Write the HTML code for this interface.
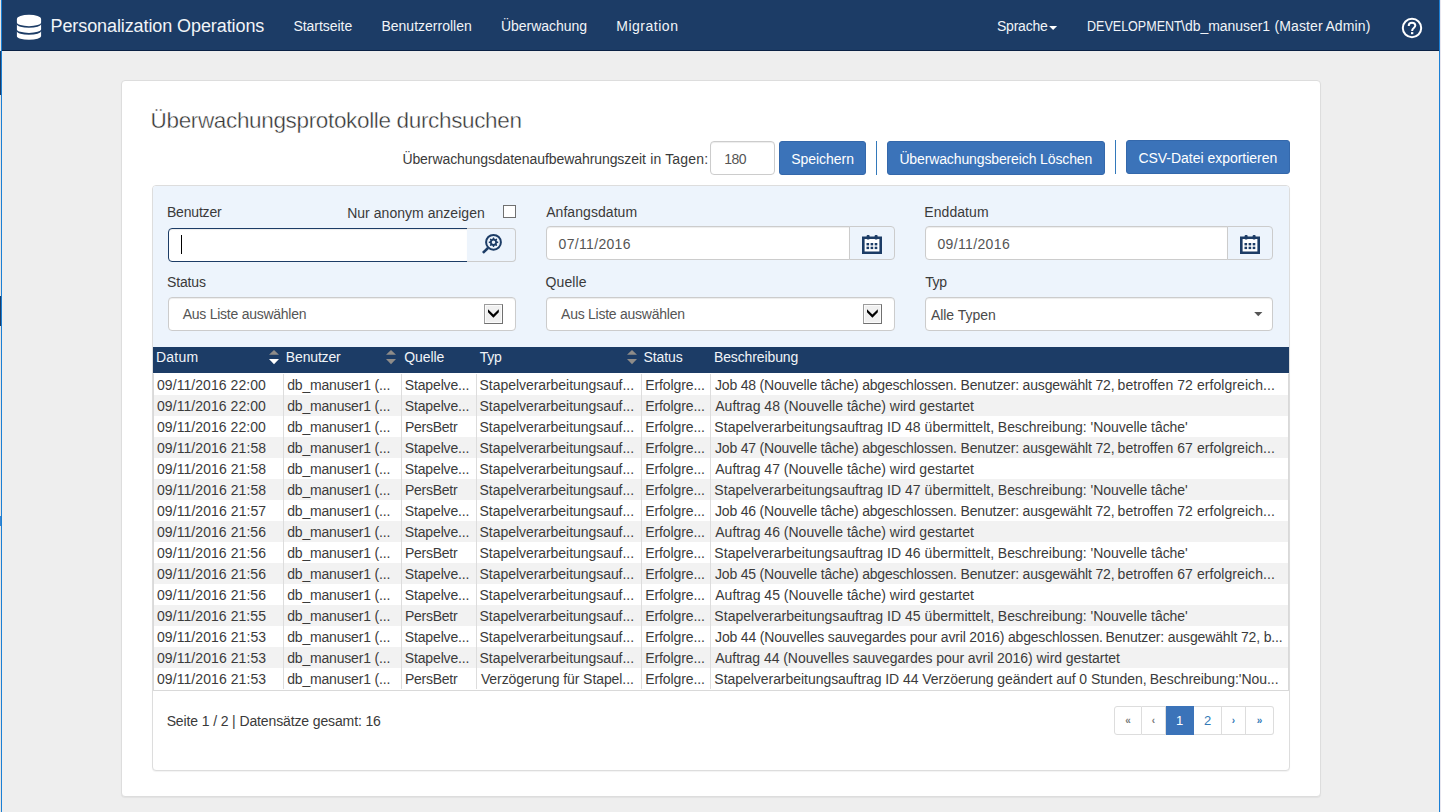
<!DOCTYPE html>
<html lang="de">
<head>
<meta charset="utf-8">
<title>Personalization Operations</title>
<style>
*{box-sizing:border-box}
html,body{margin:0;padding:0}
body{width:1441px;height:812px;overflow:hidden;position:relative;background:#eeeeee;font-family:"Liberation Sans",sans-serif;font-size:13.5px;color:#333;line-height:20px}
.abs{position:absolute}
.t{position:absolute;white-space:nowrap;line-height:20px;margin:0;font-weight:normal}
svg{position:absolute;overflow:visible}
#edgeL0{left:0;top:0;width:1px;height:812px;background:#e8e4e2}
#edgeL1{left:1px;top:0;width:1px;height:812px;background:#1b80d5}
#edgeR1{left:1439px;top:0;width:1px;height:812px;background:#1b80d5}
#edgeR0{left:1440px;top:0;width:1px;height:812px;background:#e8e6ee}
#nav{left:2px;top:0;width:1437px;height:51px;background:#1c3c66;border-bottom:1px solid #0a2144}
#card{left:121px;top:80px;width:1200px;height:717px;background:#fff;border:1px solid #dddddd;border-radius:4px;box-shadow:0 1px 1px rgba(0,0,0,.05)}
.btn{position:absolute;height:34px;background:#3b73b9;border:1px solid #3468ab;border-radius:3px}
.sep{position:absolute;width:1px;height:34px;background:#3379bb}
.inp{position:absolute;height:34px;background:#fff;border:1px solid #ccc;border-radius:4px;box-shadow:inset 0 1px 1px rgba(0,0,0,.075)}
.addon{position:absolute;height:34px;background:#edf4fc;border:1px solid #ccc;border-radius:0 4px 4px 0}
#panel{left:152px;top:185px;width:1138px;height:586px;background:#fff;border:1px solid #dddddd;border-radius:4px;box-shadow:0 1px 1px rgba(0,0,0,.05)}
#filters{left:153px;top:186px;width:1136px;height:161px;background:#edf4fc;border-radius:3px 3px 0 0}
#ghead{left:153px;top:347px;width:1136px;height:26px;background:#1c3c66}
#gbody{left:153px;top:373px;width:1136px;height:318px;background:#fff;border:1px solid #d9d9d9;border-top:1px solid #fff}
.row{position:absolute;left:154px;width:1134px;height:21px}
.row.alt{background:#f2f2f2}
.vl{position:absolute;top:374px;width:1px;height:315px;background:#dddddd}
.dd{position:absolute;width:19px;height:20px;background:#f0f0f0;border:1px solid;border-color:#9c9c9c #707070 #707070 #9c9c9c;box-shadow:inset 0 0 0 1px #fbfbfb}
.pg{position:absolute;top:706px;height:29px;background:#fff;border:1px solid #ddd;border-left:none;text-align:center;font-size:13px;line-height:28px}
.pg i{font-style:normal;font-weight:bold;font-size:10px;position:relative;top:0px}
</style>
</head>
<body>
<div class="abs" id="edgeL0"></div><div class="abs" style="left:0;top:51px;width:1px;height:44px;background:#1c3c66"></div><div class="abs" style="left:0;top:296px;width:1px;height:30px;background:#1c3c66"></div><div class="abs" style="left:0;top:516px;width:1px;height:10px;background:#3a86d0"></div><div class="abs" id="edgeL1"></div><div class="abs" id="edgeR1"></div><div class="abs" id="edgeR0"></div>
<nav class="abs" id="nav"></nav>
<svg style="left:0;top:0" width="60" height="50"><path d="M16.9,19 A12.1,4.2 0 0 1 41.1,19 L41.1,22.4 A12.1,3.8 0 0 1 16.9,22.4 Z M16.9,24.3 A12.1,3.4 0 0 0 41.1,24.3 L41.1,29.4 A12.1,3.5 0 0 1 16.9,29.4 Z M16.9,31.2 A12.1,3.5 0 0 0 41.1,31.2 L41.1,36.3 A12.1,3.5 0 0 1 16.9,36.3 Z" fill="#fff"/></svg>
<svg style="left:0;top:0" width="1441" height="50"><circle cx="1412" cy="28" r="9.2" fill="none" stroke="#fff" stroke-width="2"/><path d="M1408.7,25.9 C1408.7,23.9 1410.1,22.8 1412,22.8 C1413.9,22.8 1415.3,23.9 1415.3,25.6 C1415.3,28 1412.1,28.2 1412.1,30.9" fill="none" stroke="#fff" stroke-width="2"/><rect x="1411" y="32.1" width="2.3" height="2.1" fill="#fff"/><path d="M1049.1,26 h8 l-4,4 z" fill="#fff"/></svg>
<a class="t" style="left:50.49px;top:16px;font-size:18px;letter-spacing:-0.092px;color:#f1f4f8;">Personalization Operations</a>
<a class="t" style="left:293.46px;top:16px;font-size:14px;letter-spacing:-0.039px;color:#f1f4f8;">Startseite</a>
<a class="t" style="left:381.45px;top:16px;font-size:14px;letter-spacing:-0.0px;color:#f1f4f8;">Benutzerrollen</a>
<a class="t" style="left:500.89px;top:16px;font-size:14px;letter-spacing:-0.015px;color:#f1f4f8;">Überwachung</a>
<a class="t" style="left:616.25px;top:16px;font-size:14px;letter-spacing:0.516px;color:#f1f4f8;">Migration</a>
<a class="t" style="left:996.96px;top:16px;font-size:14px;letter-spacing:-0.225px;color:#f1f4f8;">Sprache</a>
<a class="t" style="left:1086.74px;top:16px;font-size:14px;letter-spacing:0px;color:#f1f4f8;transform-origin:0 0;transform:scaleX(0.8952);">DEVELOPMENT</a>
<a class="t" style="left:1181.12px;top:16px;font-size:14px;letter-spacing:-0.049px;color:#f1f4f8;">\db_manuser1</a>
<a class="t" style="left:1274.53px;top:16px;font-size:14px;letter-spacing:0.119px;color:#f1f4f8;">(Master</a>
<a class="t" style="left:1325.38px;top:16px;font-size:14px;letter-spacing:0.139px;color:#f1f4f8;">Admin)</a>
<main class="abs" id="card"></main>
<h1 class="t" style="left:150.57px;top:111px;font-size:22.5px;letter-spacing:-0.343px;color:#333333;-webkit-text-stroke:0.4px #fff;">Überwachungsprotokolle durchsuchen</h1>
<label class="t" style="left:402.39px;top:149px;font-size:14px;letter-spacing:-0.075px;color:#3a3a3a;">Überwachungsdatenaufbewahrungszeit</label>
<label class="t" style="left:650.22px;top:149px;font-size:14px;letter-spacing:0.154px;color:#3a3a3a;">in Tagen:</label>
<div class="inp" style="left:710px;top:141px;width:65px"></div>
<span class="t" style="left:724.22px;top:149px;font-size:14px;letter-spacing:-0.556px;color:#555;">180</span>
<div class="btn" style="left:779px;top:141px;width:87px"></div>
<span class="t" style="left:791.16px;top:149px;font-size:14px;letter-spacing:-0.024px;color:#fff;">Speichern</span>
<div class="sep" style="left:876px;top:141px"></div>
<div class="btn" style="left:887px;top:141px;width:218px"></div>
<span class="t" style="left:899.39px;top:149px;font-size:14px;letter-spacing:-0.125px;color:#fff;">Überwachungsbereich Löschen</span>
<div class="sep" style="left:1115px;top:140px"></div>
<div class="btn" style="left:1126px;top:140px;width:164px"></div>
<span class="t" style="left:1138.39px;top:148px;font-size:14px;letter-spacing:-0.022px;color:#fff;">CSV-Datei exportieren</span>
<section class="abs" id="panel"></section><div class="abs" id="filters"></div>
<label class="t" style="left:166.95px;top:202px;font-size:14px;letter-spacing:-0.189px;color:#3a3a3a;">Benutzer</label>
<label class="t" style="left:347.15px;top:203px;font-size:14px;letter-spacing:0.036px;color:#3a3a3a;">Nur anonym anzeigen</label>
<label class="t" style="left:546.18px;top:202px;font-size:14px;letter-spacing:0.057px;color:#3a3a3a;">Anfangsdatum</label>
<label class="t" style="left:924.35px;top:202px;font-size:14px;letter-spacing:0.058px;color:#3a3a3a;">Enddatum</label>
<label class="t" style="left:166.96px;top:272px;font-size:14px;letter-spacing:-0.132px;color:#3a3a3a;">Status</label>
<label class="t" style="left:545.6px;top:272px;font-size:14px;letter-spacing:0.074px;color:#3a3a3a;">Quelle</label>
<label class="t" style="left:925.24px;top:272px;font-size:14px;letter-spacing:-0.402px;color:#3a3a3a;">Typ</label>
<div class="inp" style="left:168px;top:228px;width:300px;border-radius:4px 0 0 4px;border-color:#1c3c66"></div>
<div class="abs" style="left:181px;top:235px;width:1px;height:19px;background:#000"></div>
<div class="addon" style="left:467px;top:228px;width:49px;border-left:none"></div>
<svg style="left:0;top:0" width="1441" height="300"><circle cx="493.5" cy="242.3" r="7.4" fill="none" stroke="#1c3c66" stroke-width="2"/><path d="M488,248 L482.9,252.9" stroke="#1c3c66" stroke-width="2.6" fill="none"/><path d="M493.03,237.52 L493.97,237.52 L494.55,238.86 L495.20,239.13 L496.55,238.59 L497.21,239.25 L496.67,240.60 L496.94,241.25 L498.28,241.83 L498.28,242.77 L496.94,243.35 L496.67,244.00 L497.21,245.35 L496.55,246.01 L495.20,245.47 L494.55,245.74 L493.97,247.08 L493.03,247.08 L492.45,245.74 L491.80,245.47 L490.45,246.01 L489.79,245.35 L490.33,244.00 L490.06,243.35 L488.72,242.77 L488.72,241.83 L490.06,241.25 L490.33,240.60 L489.79,239.25 L490.45,238.59 L491.80,239.13 L492.45,238.86 Z M491.75,242.3 a1.75,1.75 0 1 0 3.5,0 a1.75,1.75 0 1 0 -3.5,0 Z" fill="#1c3c66" fill-rule="evenodd"/></svg>
<div class="abs" style="left:503px;top:205px;width:13px;height:13px;background:#fff;border:1px solid #707070"></div>
<div class="inp" style="left:546px;top:226px;width:304px;border-radius:4px 0 0 4px"></div>
<span class="t" style="left:558.6px;top:234px;font-size:14px;letter-spacing:0.317px;color:#555;">07/11/2016</span>
<div class="addon" style="left:849px;top:226px;width:46px"></div>
<svg style="left:862px;top:234.5px" width="20" height="19"><rect x="1" y="2" width="18" height="16" fill="#fff"/><path d="M0,1.6 H20 V19 H0 Z M2.6,4.0 V16.4 H17.4 V4.0 Z" fill="#1c3c66" fill-rule="evenodd"/><rect x="4.6" y="0" width="3" height="4.6" rx="1" fill="#1c3c66"/><rect x="12.6" y="0" width="3" height="4.6" rx="1" fill="#1c3c66"/><rect x="4.5" y="8.0" width="2.6" height="2.4" fill="#1c3c66"/><rect x="4.5" y="11.7" width="2.6" height="2.4" fill="#1c3c66"/><rect x="8.6" y="8.0" width="2.6" height="2.4" fill="#1c3c66"/><rect x="8.6" y="11.7" width="2.6" height="2.4" fill="#1c3c66"/><rect x="12.7" y="8.0" width="2.6" height="2.4" fill="#1c3c66"/><rect x="12.7" y="11.7" width="2.6" height="2.4" fill="#1c3c66"/></svg>
<div class="inp" style="left:925px;top:226px;width:303px;border-radius:4px 0 0 4px"></div>
<span class="t" style="left:937.4px;top:234px;font-size:14px;letter-spacing:0.361px;color:#555;">09/11/2016</span>
<div class="addon" style="left:1227px;top:226px;width:46px"></div>
<svg style="left:1240px;top:234.5px" width="20" height="19"><rect x="1" y="2" width="18" height="16" fill="#fff"/><path d="M0,1.6 H20 V19 H0 Z M2.6,4.0 V16.4 H17.4 V4.0 Z" fill="#1c3c66" fill-rule="evenodd"/><rect x="4.6" y="0" width="3" height="4.6" rx="1" fill="#1c3c66"/><rect x="12.6" y="0" width="3" height="4.6" rx="1" fill="#1c3c66"/><rect x="4.5" y="8.0" width="2.6" height="2.4" fill="#1c3c66"/><rect x="4.5" y="11.7" width="2.6" height="2.4" fill="#1c3c66"/><rect x="8.6" y="8.0" width="2.6" height="2.4" fill="#1c3c66"/><rect x="8.6" y="11.7" width="2.6" height="2.4" fill="#1c3c66"/><rect x="12.7" y="8.0" width="2.6" height="2.4" fill="#1c3c66"/><rect x="12.7" y="11.7" width="2.6" height="2.4" fill="#1c3c66"/></svg>
<div class="inp" style="left:168px;top:297px;width:348px"></div>
<span class="t" style="left:182.68px;top:304px;font-size:14px;letter-spacing:-0.252px;color:#555;">Aus Liste auswählen</span>
<div class="dd" style="left:484px;top:304px"></div><svg style="left:484px;top:304px" width="19" height="20"><path d="M4,5.2 L9.4,10.6 L14.8,5.2 L14.8,8.2 L9.4,13.7 L4,8.2 Z" fill="#000"/></svg>
<div class="inp" style="left:546px;top:297px;width:349px"></div>
<span class="t" style="left:561.08px;top:304px;font-size:14px;letter-spacing:-0.252px;color:#555;">Aus Liste auswählen</span>
<div class="dd" style="left:863px;top:304px"></div><svg style="left:863px;top:304px" width="19" height="20"><path d="M4,5.2 L9.4,10.6 L14.8,5.2 L14.8,8.2 L9.4,13.7 L4,8.2 Z" fill="#000"/></svg>
<div class="inp" style="left:925px;top:297px;width:348px"></div>
<span class="t" style="left:930.88px;top:305px;font-size:14px;letter-spacing:-0.028px;color:#4a4a4a;">Alle Typen</span>
<svg style="left:1254px;top:312px" width="9" height="5"><path d="M0.2,0 H8.4 L4.3,4.2 Z" fill="#555"/></svg>
<div class="abs" id="ghead"></div>
<span class="t" style="left:155.95px;top:347px;font-size:14px;letter-spacing:0.223px;color:#f1f4f8;">Datum</span>
<span class="t" style="left:285.85px;top:347px;font-size:14px;letter-spacing:-0.161px;color:#f1f4f8;">Benutzer</span>
<span class="t" style="left:404.2px;top:347px;font-size:14px;letter-spacing:-0.072px;color:#f1f4f8;">Quelle</span>
<span class="t" style="left:479.74px;top:347px;font-size:14px;letter-spacing:-0.196px;color:#f1f4f8;">Typ</span>
<span class="t" style="left:643.56px;top:347px;font-size:14px;letter-spacing:-0.106px;color:#f1f4f8;">Status</span>
<span class="t" style="left:713.95px;top:347px;font-size:14px;letter-spacing:-0.112px;color:#f1f4f8;">Beschreibung</span>
<svg style="left:268.6px;top:350px" width="10" height="15"><path d="M0,4.8 L5,0 L10,4.8 Z" fill="#8f8c89"/><path d="M0,9.0 L10,9.0 L5,14.2 Z" fill="#fff"/></svg>
<svg style="left:386px;top:350px" width="10" height="15"><path d="M0,4.8 L5,0 L10,4.8 Z" fill="#8f8c89"/><path d="M0,9.0 L10,9.0 L5,14.2 Z" fill="#8f8c89"/></svg>
<svg style="left:626.7px;top:350px" width="10" height="15"><path d="M0,4.8 L5,0 L10,4.8 Z" fill="#8f8c89"/><path d="M0,9.0 L10,9.0 L5,14.2 Z" fill="#8f8c89"/></svg>
<div class="abs" id="gbody"></div>
<div class="row" style="top:374px"></div>
<div class="row alt" style="top:395px"></div>
<div class="row" style="top:416px"></div>
<div class="row alt" style="top:437px"></div>
<div class="row" style="top:458px"></div>
<div class="row alt" style="top:479px"></div>
<div class="row" style="top:500px"></div>
<div class="row alt" style="top:521px"></div>
<div class="row" style="top:542px"></div>
<div class="row alt" style="top:563px"></div>
<div class="row" style="top:584px"></div>
<div class="row alt" style="top:605px"></div>
<div class="row" style="top:626px"></div>
<div class="row alt" style="top:647px"></div>
<div class="row" style="top:668px"></div>
<div class="vl" style="left:283px"></div>
<div class="vl" style="left:401px"></div>
<div class="vl" style="left:476px"></div>
<div class="vl" style="left:641px"></div>
<div class="vl" style="left:710px"></div>
<span class="t" style="left:157.0px;top:375px;font-size:14px;letter-spacing:0.062px;color:#3b3b3b;">09/11/2016 22:00</span>
<span class="t" style="left:287.18px;top:375px;font-size:14px;letter-spacing:-0.18px;color:#3b3b3b;">db_manuser1 (...</span>
<span class="t" style="left:404.76px;top:375px;font-size:14px;letter-spacing:-0.142px;color:#3b3b3b;">Stapelve...</span>
<span class="t" style="left:479.56px;top:375px;font-size:14px;letter-spacing:-0.049px;color:#3b3b3b;">Stapelverarbeitungsauf...</span>
<span class="t" style="left:645.25px;top:375px;font-size:14px;letter-spacing:-0.102px;color:#3b3b3b;">Erfolgre...</span>
<span class="t" style="left:715.07px;top:375px;font-size:14px;letter-spacing:-0.195px;color:#3b3b3b;">Job 48 (Nouvelle tâche) abgeschlossen.</span>
<span class="t" style="left:960.55px;top:375px;font-size:14px;letter-spacing:-0.174px;color:#3b3b3b;">Benutzer: ausgewählt 72,</span>
<span class="t" style="left:1117.59px;top:375px;font-size:14px;letter-spacing:0.073px;color:#3b3b3b;">betroffen 72 erfolgreich...</span>
<span class="t" style="left:157.0px;top:396px;font-size:14px;letter-spacing:0.062px;color:#3b3b3b;">09/11/2016 22:00</span>
<span class="t" style="left:287.18px;top:396px;font-size:14px;letter-spacing:-0.18px;color:#3b3b3b;">db_manuser1 (...</span>
<span class="t" style="left:404.76px;top:396px;font-size:14px;letter-spacing:-0.142px;color:#3b3b3b;">Stapelve...</span>
<span class="t" style="left:479.56px;top:396px;font-size:14px;letter-spacing:-0.049px;color:#3b3b3b;">Stapelverarbeitungsauf...</span>
<span class="t" style="left:645.25px;top:396px;font-size:14px;letter-spacing:-0.102px;color:#3b3b3b;">Erfolgre...</span>
<span class="t" style="left:715.28px;top:396px;font-size:14px;letter-spacing:0.007px;color:#3b3b3b;">Auftrag 48 (Nouvelle tâche) wird gestartet</span>
<span class="t" style="left:157.0px;top:417px;font-size:14px;letter-spacing:0.062px;color:#3b3b3b;">09/11/2016 22:00</span>
<span class="t" style="left:287.18px;top:417px;font-size:14px;letter-spacing:-0.18px;color:#3b3b3b;">db_manuser1 (...</span>
<span class="t" style="left:405.05px;top:417px;font-size:14px;letter-spacing:-0.278px;color:#3b3b3b;">PersBetr</span>
<span class="t" style="left:479.56px;top:417px;font-size:14px;letter-spacing:-0.049px;color:#3b3b3b;">Stapelverarbeitungsauf...</span>
<span class="t" style="left:645.25px;top:417px;font-size:14px;letter-spacing:-0.102px;color:#3b3b3b;">Erfolgre...</span>
<span class="t" style="left:714.36px;top:417px;font-size:14px;letter-spacing:0.026px;color:#3b3b3b;">Stapelverarbeitungsauftrag ID 48 übermittelt,</span>
<span class="t" style="left:997.85px;top:417px;font-size:14px;letter-spacing:-0.05px;color:#3b3b3b;">Beschreibung: &#x27;Nouvelle tâche&#x27;</span>
<span class="t" style="left:157.0px;top:438px;font-size:14px;letter-spacing:0.074px;color:#3b3b3b;">09/11/2016 21:58</span>
<span class="t" style="left:287.18px;top:438px;font-size:14px;letter-spacing:-0.18px;color:#3b3b3b;">db_manuser1 (...</span>
<span class="t" style="left:404.76px;top:438px;font-size:14px;letter-spacing:-0.142px;color:#3b3b3b;">Stapelve...</span>
<span class="t" style="left:479.56px;top:438px;font-size:14px;letter-spacing:-0.049px;color:#3b3b3b;">Stapelverarbeitungsauf...</span>
<span class="t" style="left:645.25px;top:438px;font-size:14px;letter-spacing:-0.102px;color:#3b3b3b;">Erfolgre...</span>
<span class="t" style="left:715.07px;top:438px;font-size:14px;letter-spacing:-0.195px;color:#3b3b3b;">Job 47 (Nouvelle tâche) abgeschlossen.</span>
<span class="t" style="left:960.55px;top:438px;font-size:14px;letter-spacing:-0.174px;color:#3b3b3b;">Benutzer: ausgewählt 72,</span>
<span class="t" style="left:1117.59px;top:438px;font-size:14px;letter-spacing:0.073px;color:#3b3b3b;">betroffen 67 erfolgreich...</span>
<span class="t" style="left:157.0px;top:459px;font-size:14px;letter-spacing:0.074px;color:#3b3b3b;">09/11/2016 21:58</span>
<span class="t" style="left:287.18px;top:459px;font-size:14px;letter-spacing:-0.18px;color:#3b3b3b;">db_manuser1 (...</span>
<span class="t" style="left:404.76px;top:459px;font-size:14px;letter-spacing:-0.142px;color:#3b3b3b;">Stapelve...</span>
<span class="t" style="left:479.56px;top:459px;font-size:14px;letter-spacing:-0.049px;color:#3b3b3b;">Stapelverarbeitungsauf...</span>
<span class="t" style="left:645.25px;top:459px;font-size:14px;letter-spacing:-0.102px;color:#3b3b3b;">Erfolgre...</span>
<span class="t" style="left:715.28px;top:459px;font-size:14px;letter-spacing:0.007px;color:#3b3b3b;">Auftrag 47 (Nouvelle tâche) wird gestartet</span>
<span class="t" style="left:157.0px;top:480px;font-size:14px;letter-spacing:0.074px;color:#3b3b3b;">09/11/2016 21:58</span>
<span class="t" style="left:287.18px;top:480px;font-size:14px;letter-spacing:-0.18px;color:#3b3b3b;">db_manuser1 (...</span>
<span class="t" style="left:405.05px;top:480px;font-size:14px;letter-spacing:-0.278px;color:#3b3b3b;">PersBetr</span>
<span class="t" style="left:479.56px;top:480px;font-size:14px;letter-spacing:-0.049px;color:#3b3b3b;">Stapelverarbeitungsauf...</span>
<span class="t" style="left:645.25px;top:480px;font-size:14px;letter-spacing:-0.102px;color:#3b3b3b;">Erfolgre...</span>
<span class="t" style="left:714.36px;top:480px;font-size:14px;letter-spacing:0.026px;color:#3b3b3b;">Stapelverarbeitungsauftrag ID 47 übermittelt,</span>
<span class="t" style="left:997.85px;top:480px;font-size:14px;letter-spacing:-0.05px;color:#3b3b3b;">Beschreibung: &#x27;Nouvelle tâche&#x27;</span>
<span class="t" style="left:157.0px;top:501px;font-size:14px;letter-spacing:0.077px;color:#3b3b3b;">09/11/2016 21:57</span>
<span class="t" style="left:287.18px;top:501px;font-size:14px;letter-spacing:-0.18px;color:#3b3b3b;">db_manuser1 (...</span>
<span class="t" style="left:404.76px;top:501px;font-size:14px;letter-spacing:-0.142px;color:#3b3b3b;">Stapelve...</span>
<span class="t" style="left:479.56px;top:501px;font-size:14px;letter-spacing:-0.049px;color:#3b3b3b;">Stapelverarbeitungsauf...</span>
<span class="t" style="left:645.25px;top:501px;font-size:14px;letter-spacing:-0.102px;color:#3b3b3b;">Erfolgre...</span>
<span class="t" style="left:715.07px;top:501px;font-size:14px;letter-spacing:-0.195px;color:#3b3b3b;">Job 46 (Nouvelle tâche) abgeschlossen.</span>
<span class="t" style="left:960.55px;top:501px;font-size:14px;letter-spacing:-0.174px;color:#3b3b3b;">Benutzer: ausgewählt 72,</span>
<span class="t" style="left:1117.59px;top:501px;font-size:14px;letter-spacing:0.073px;color:#3b3b3b;">betroffen 72 erfolgreich...</span>
<span class="t" style="left:157.0px;top:522px;font-size:14px;letter-spacing:0.07px;color:#3b3b3b;">09/11/2016 21:56</span>
<span class="t" style="left:287.18px;top:522px;font-size:14px;letter-spacing:-0.18px;color:#3b3b3b;">db_manuser1 (...</span>
<span class="t" style="left:404.76px;top:522px;font-size:14px;letter-spacing:-0.142px;color:#3b3b3b;">Stapelve...</span>
<span class="t" style="left:479.56px;top:522px;font-size:14px;letter-spacing:-0.049px;color:#3b3b3b;">Stapelverarbeitungsauf...</span>
<span class="t" style="left:645.25px;top:522px;font-size:14px;letter-spacing:-0.102px;color:#3b3b3b;">Erfolgre...</span>
<span class="t" style="left:715.28px;top:522px;font-size:14px;letter-spacing:0.007px;color:#3b3b3b;">Auftrag 46 (Nouvelle tâche) wird gestartet</span>
<span class="t" style="left:157.0px;top:543px;font-size:14px;letter-spacing:0.07px;color:#3b3b3b;">09/11/2016 21:56</span>
<span class="t" style="left:287.18px;top:543px;font-size:14px;letter-spacing:-0.18px;color:#3b3b3b;">db_manuser1 (...</span>
<span class="t" style="left:405.05px;top:543px;font-size:14px;letter-spacing:-0.278px;color:#3b3b3b;">PersBetr</span>
<span class="t" style="left:479.56px;top:543px;font-size:14px;letter-spacing:-0.049px;color:#3b3b3b;">Stapelverarbeitungsauf...</span>
<span class="t" style="left:645.25px;top:543px;font-size:14px;letter-spacing:-0.102px;color:#3b3b3b;">Erfolgre...</span>
<span class="t" style="left:714.36px;top:543px;font-size:14px;letter-spacing:0.026px;color:#3b3b3b;">Stapelverarbeitungsauftrag ID 46 übermittelt,</span>
<span class="t" style="left:997.85px;top:543px;font-size:14px;letter-spacing:-0.05px;color:#3b3b3b;">Beschreibung: &#x27;Nouvelle tâche&#x27;</span>
<span class="t" style="left:157.0px;top:564px;font-size:14px;letter-spacing:0.07px;color:#3b3b3b;">09/11/2016 21:56</span>
<span class="t" style="left:287.18px;top:564px;font-size:14px;letter-spacing:-0.18px;color:#3b3b3b;">db_manuser1 (...</span>
<span class="t" style="left:404.76px;top:564px;font-size:14px;letter-spacing:-0.142px;color:#3b3b3b;">Stapelve...</span>
<span class="t" style="left:479.56px;top:564px;font-size:14px;letter-spacing:-0.049px;color:#3b3b3b;">Stapelverarbeitungsauf...</span>
<span class="t" style="left:645.25px;top:564px;font-size:14px;letter-spacing:-0.102px;color:#3b3b3b;">Erfolgre...</span>
<span class="t" style="left:715.07px;top:564px;font-size:14px;letter-spacing:-0.195px;color:#3b3b3b;">Job 45 (Nouvelle tâche) abgeschlossen.</span>
<span class="t" style="left:960.55px;top:564px;font-size:14px;letter-spacing:-0.174px;color:#3b3b3b;">Benutzer: ausgewählt 72,</span>
<span class="t" style="left:1117.59px;top:564px;font-size:14px;letter-spacing:0.073px;color:#3b3b3b;">betroffen 67 erfolgreich...</span>
<span class="t" style="left:157.0px;top:585px;font-size:14px;letter-spacing:0.07px;color:#3b3b3b;">09/11/2016 21:56</span>
<span class="t" style="left:287.18px;top:585px;font-size:14px;letter-spacing:-0.18px;color:#3b3b3b;">db_manuser1 (...</span>
<span class="t" style="left:404.76px;top:585px;font-size:14px;letter-spacing:-0.142px;color:#3b3b3b;">Stapelve...</span>
<span class="t" style="left:479.56px;top:585px;font-size:14px;letter-spacing:-0.049px;color:#3b3b3b;">Stapelverarbeitungsauf...</span>
<span class="t" style="left:645.25px;top:585px;font-size:14px;letter-spacing:-0.102px;color:#3b3b3b;">Erfolgre...</span>
<span class="t" style="left:715.28px;top:585px;font-size:14px;letter-spacing:0.007px;color:#3b3b3b;">Auftrag 45 (Nouvelle tâche) wird gestartet</span>
<span class="t" style="left:157.0px;top:606px;font-size:14px;letter-spacing:0.067px;color:#3b3b3b;">09/11/2016 21:55</span>
<span class="t" style="left:287.18px;top:606px;font-size:14px;letter-spacing:-0.18px;color:#3b3b3b;">db_manuser1 (...</span>
<span class="t" style="left:405.05px;top:606px;font-size:14px;letter-spacing:-0.278px;color:#3b3b3b;">PersBetr</span>
<span class="t" style="left:479.56px;top:606px;font-size:14px;letter-spacing:-0.049px;color:#3b3b3b;">Stapelverarbeitungsauf...</span>
<span class="t" style="left:645.25px;top:606px;font-size:14px;letter-spacing:-0.102px;color:#3b3b3b;">Erfolgre...</span>
<span class="t" style="left:714.36px;top:606px;font-size:14px;letter-spacing:0.026px;color:#3b3b3b;">Stapelverarbeitungsauftrag ID 45 übermittelt,</span>
<span class="t" style="left:997.85px;top:606px;font-size:14px;letter-spacing:-0.05px;color:#3b3b3b;">Beschreibung: &#x27;Nouvelle tâche&#x27;</span>
<span class="t" style="left:157.0px;top:627px;font-size:14px;letter-spacing:0.073px;color:#3b3b3b;">09/11/2016 21:53</span>
<span class="t" style="left:287.18px;top:627px;font-size:14px;letter-spacing:-0.18px;color:#3b3b3b;">db_manuser1 (...</span>
<span class="t" style="left:404.76px;top:627px;font-size:14px;letter-spacing:-0.142px;color:#3b3b3b;">Stapelve...</span>
<span class="t" style="left:479.56px;top:627px;font-size:14px;letter-spacing:-0.049px;color:#3b3b3b;">Stapelverarbeitungsauf...</span>
<span class="t" style="left:645.25px;top:627px;font-size:14px;letter-spacing:-0.102px;color:#3b3b3b;">Erfolgre...</span>
<span class="t" style="left:715.07px;top:627px;font-size:14px;letter-spacing:-0.177px;color:#3b3b3b;">Job 44 (Nouvelles sauvegardes pour avril 2016) abgeschlossen.</span>
<span class="t" style="left:1105.45px;top:627px;font-size:14px;letter-spacing:-0.145px;color:#3b3b3b;">Benutzer: ausgewählt 72, b...</span>
<span class="t" style="left:157.0px;top:648px;font-size:14px;letter-spacing:0.073px;color:#3b3b3b;">09/11/2016 21:53</span>
<span class="t" style="left:287.18px;top:648px;font-size:14px;letter-spacing:-0.18px;color:#3b3b3b;">db_manuser1 (...</span>
<span class="t" style="left:404.76px;top:648px;font-size:14px;letter-spacing:-0.142px;color:#3b3b3b;">Stapelve...</span>
<span class="t" style="left:479.56px;top:648px;font-size:14px;letter-spacing:-0.049px;color:#3b3b3b;">Stapelverarbeitungsauf...</span>
<span class="t" style="left:645.25px;top:648px;font-size:14px;letter-spacing:-0.102px;color:#3b3b3b;">Erfolgre...</span>
<span class="t" style="left:715.28px;top:648px;font-size:14px;letter-spacing:-0.049px;color:#3b3b3b;">Auftrag 44 (Nouvelles sauvegardes pour avril 2016) wird gestartet</span>
<span class="t" style="left:157.0px;top:669px;font-size:14px;letter-spacing:0.073px;color:#3b3b3b;">09/11/2016 21:53</span>
<span class="t" style="left:287.18px;top:669px;font-size:14px;letter-spacing:-0.18px;color:#3b3b3b;">db_manuser1 (...</span>
<span class="t" style="left:405.05px;top:669px;font-size:14px;letter-spacing:-0.278px;color:#3b3b3b;">PersBetr</span>
<span class="t" style="left:480.88px;top:669px;font-size:14px;letter-spacing:-0.079px;color:#3b3b3b;">Verzögerung für Stapel...</span>
<span class="t" style="left:645.25px;top:669px;font-size:14px;letter-spacing:-0.102px;color:#3b3b3b;">Erfolgre...</span>
<span class="t" style="left:714.36px;top:669px;font-size:14px;letter-spacing:-0.042px;color:#3b3b3b;">Stapelverarbeitungsauftrag ID 44 Verzöerung geändert auf 0 Stunden,</span>
<span class="t" style="left:1149.65px;top:669px;font-size:14px;letter-spacing:-0.031px;color:#3b3b3b;">Beschreibung:&#x27;Nou...</span>
<span class="t" style="left:166.66px;top:711px;font-size:14px;letter-spacing:-0.123px;color:#3a3a3a;">Seite 1 / 2 | Datensätze gesamt: 16</span>
<a class="pg" style="left:1114px;width:28px;color:#777;background:#fff;border-left:1px solid #ddd;border-radius:3px 0 0 3px;"><i>«</i></a>
<a class="pg" style="left:1142px;width:24px;color:#777;background:#fff;"><i>‹</i></a>
<a class="pg" style="left:1166px;width:28px;color:#fff;background:#3b73b9;border-color:#3b73b9;">1</a>
<a class="pg" style="left:1194px;width:28px;color:#337ab7;background:#fff;">2</a>
<a class="pg" style="left:1222px;width:24px;color:#337ab7;background:#fff;"><i>›</i></a>
<a class="pg" style="left:1246px;width:28px;color:#337ab7;background:#fff;border-radius:0 3px 3px 0;"><i>»</i></a>
</body>
</html>
